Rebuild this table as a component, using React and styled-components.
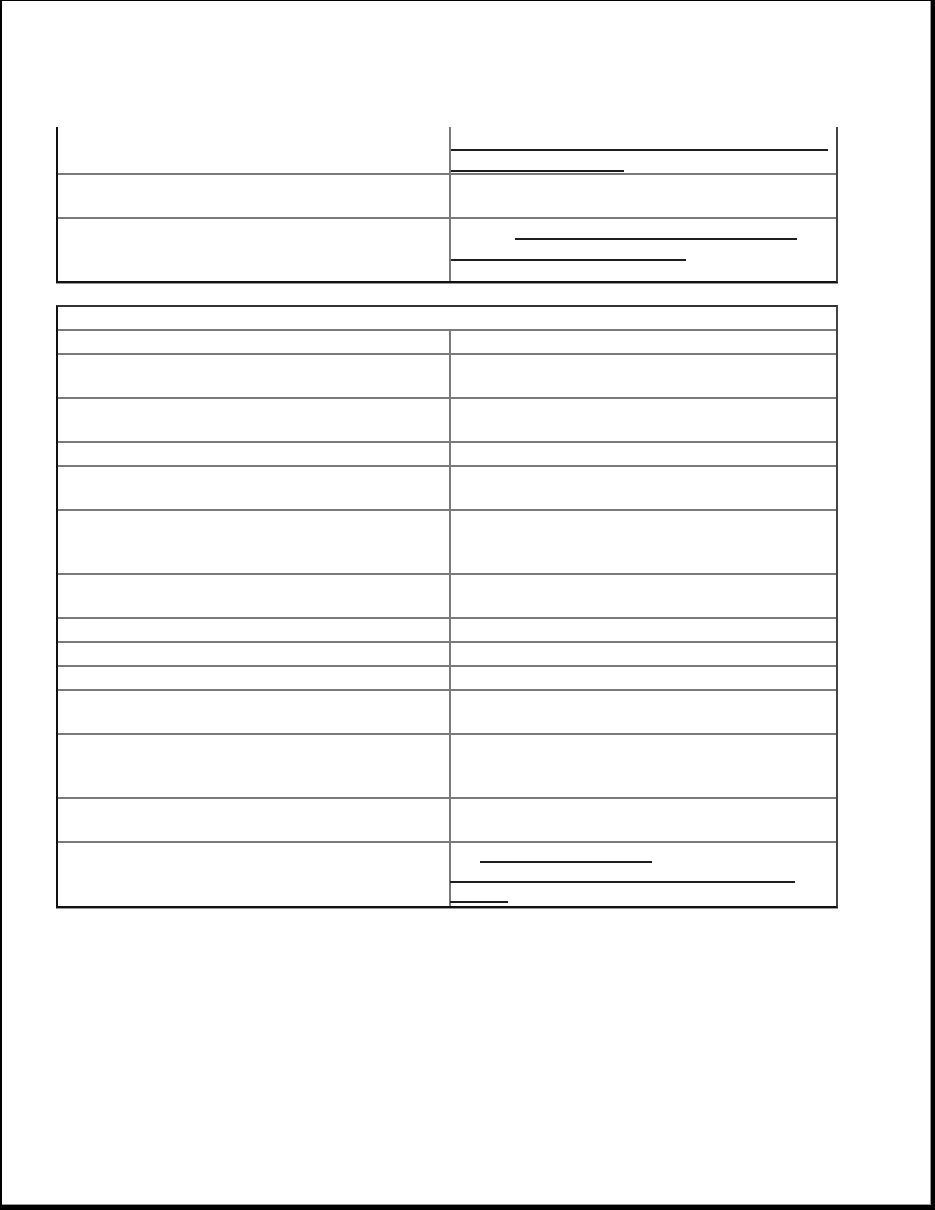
import React from 'react';
import styled, {createGlobalStyle} from 'styled-components';

const GlobalStyle = createGlobalStyle`
	html, body {
		margin: 0;
		padding: 0;
		background: #fff;
		font-family: "Liberation Sans", Arial, sans-serif;
		font-size: 13px;
	}
`;

const Page = styled.div`
	box-sizing: border-box;
	width: 935px;
	height: 1210px;
	background: #fff;
	border-top: 1px solid #000;
	border-left: 2px solid #000;
	border-right: 4px solid #000;
	border-bottom: 5px solid #000;
	box-shadow: inset -1px -1px 0 #999;
	padding: 126px 0 0 54px;
	display: flex;
	flex-direction: column;
	gap: 22px;
`;

const Table = styled.div`
	width: 782px;
	box-sizing: border-box;
	border-left: 2px solid #111;
	border-right: 2px solid #444;
	border-bottom: 2px solid #111;
	border-top: ${p => (p.$open ? 'none' : '2px solid #333')};
	box-shadow: 0 1px 0 #999;
	display: flex;
	flex-direction: column;
`;

const Row = styled.div`
	display: grid;
	grid-template-columns: ${p => (p.$span ? '1fr' : '391px 1fr')};
	height: ${p => p.$h}px;
	& + & {
		border-top: 2px solid ${p => (p.$dark ? '#333' : '#7a7a7a')};
	}
`;

const Cell = styled.div`
	padding-top: ${p => p.$pt || 0}px;
	& + & {
		border-left: 2px solid #7a7a7a;
	}
`;

const Line = styled.div`
	box-sizing: border-box;
	height: ${p => p.$lh || 21}px;
	display: flex;
	align-items: flex-end;
`;

const Link = styled.a`
	display: block;
	height: 0;
	border-bottom: 2px solid #1e1e1e;
	margin-left: ${p => p.$from}px;
	width: ${p => p.$w}px;
	color: transparent;
`;

// each entry: [height, [ [from, width] per underlined line ], paddingTop, lineHeight]
const firstRows = [
	{h: 46, pt: 3, links: [[0, 377], [0, 173]]},
	{h: 42},
	{h: 62, pt: 0, links: [[64, 282], [0, 235]]},
];

const secondRows = [
	{h: 22}, {h: 42, dark: true}, {h: 42}, {h: 22}, {h: 42, dark: true},
	{h: 62}, {h: 42, dark: true}, {h: 22}, {h: 22, dark: true}, {h: 22},
	{h: 42, dark: true}, {h: 62}, {h: 42, dark: true},
	{h: 63, pt: 0, lh: 20, links: [[29, 172], [-1, 345], [-1, 58]]},
];

const RightCell = ({pt, lh, links}) => (
	<Cell $pt={pt}>
		{(links || []).map(([from, w], i) => (
			<Line key={i} $lh={lh}>
				<Link href="#" $from={from} $w={w} />
			</Line>
		))}
	</Cell>
);

const Rows = ({rows}) => rows.map((r, i) => (
	<Row key={i} $h={r.h} $dark={r.dark}>
		<Cell />
		<RightCell {...r} />
	</Row>
));

const App = () => (
	<>
		<GlobalStyle />
		<Page>
			<Table $open>
				<Rows rows={firstRows} />
			</Table>
			<Table>
				<Row $span $h={22}>
					<Cell />
				</Row>
				<Rows rows={secondRows} />
			</Table>
		</Page>
	</>
);

export default App;
